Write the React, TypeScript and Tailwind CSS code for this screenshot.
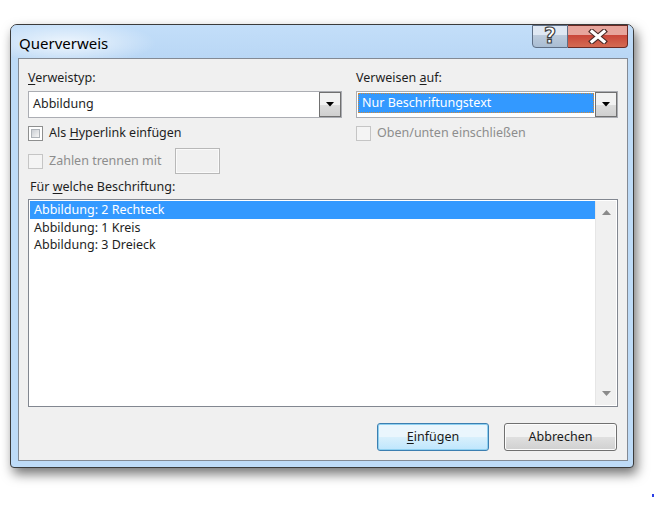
import { ReactNode } from "react";

const font = "font-['Noto_Sans',sans-serif]";

const Check = ({ disabled }: { disabled?: boolean }) => (
    <span
        className={
            disabled
                ? "w-[15px] h-[15px] border border-[#c5c5c5] bg-[#f4f4f4] shrink-0"
                : "w-[15px] h-[15px] border border-[#8e8f8f] bg-white p-[2px] shrink-0"
        }
    >
        {!disabled && (
            <span className="block w-full h-full border border-[#aeb3b9] bg-gradient-to-br from-[#cbcfd5] to-[#f6f6f6]" />
        )}
    </span>
);

const DropButton = () => (
    <div className="w-[22px] h-full border border-[#707070] bg-gradient-to-b from-[#f2f2f2] from-50% via-[#dddddd] via-50% to-[#cfcfcf] flex items-center justify-center">
        <svg width="8" height="5" viewBox="0 0 8 5">
            <path d="M0 0 H8 L4 4.5 Z" fill="#000" />
        </svg>
    </div>
);

const Button = ({ children, primary }: { children: ReactNode; primary?: boolean }) => (
    <div
        className={
            primary
                ? "w-[112px] h-[28px] rounded-[3px] border border-[#3c7fb1] bg-gradient-to-b from-[#eaf6fd] from-50% via-[#d9f0fc] via-50% to-[#bee6fd] shadow-[inset_0_0_0_1px_#8fd0f0] flex items-center justify-center text-[#1a1a1a]"
                : "w-[113px] h-[28px] rounded-[3px] border border-[#707070] bg-gradient-to-b from-[#f2f2f2] from-50% via-[#e0e0e0] via-50% to-[#d0d0d0] shadow-[inset_0_0_0_1px_#fcfcfc] flex items-center justify-center text-[#1a1a1a]"
        }
    >
        {children}
    </div>
);

export default function App() {
    const items = ["Abbildung: 2 Rechteck", "Abbildung: 1 Kreis", "Abbildung: 3 Dreieck"];

    return (
        <div className={`w-[655px] h-[509px] bg-white relative overflow-hidden pt-[24px] pl-[10px] ${font} text-[12.5px] text-[#1e1e1e]`}>
            {/* window */}
            <div className="w-[624px] h-[444px] rounded-t-[7px] rounded-b-[4px] border border-[#3b3b3b] bg-[#bedbf7] shadow-[3px_6px_12px_rgba(0,0,0,0.55)] flex flex-col">
                {/* title bar */}
                <div className="h-[33px] flex items-start rounded-t-[6px] bg-[radial-gradient(ellipse_90px_22px_at_55px_18px,rgba(255,255,255,0.75),rgba(255,255,255,0)),linear-gradient(to_bottom,#c3def9,#b9d7f5)]">
                    <div className="pl-[8px] pt-[8px] text-[15px] leading-[20px] text-black">Querverweis</div>
                    <div className="ml-auto mr-[5px] flex h-[23px]">
                        <div className="w-[36px] h-[23px] rounded-bl-[4px] border border-[#5e6f86] bg-gradient-to-b from-[#dfe8f3] from-45% via-[#bccbdc] via-45% to-[#a9bdd3] flex items-center justify-center">
                            <span className="text-[21px] leading-none font-bold text-white [-webkit-text-stroke:1.2px_#3f3f3f] font-['DejaVu_Sans',sans-serif]">?</span>
                        </div>
                        <div className="w-[60px] h-[23px] rounded-br-[4px] border border-l-0 border-[#6b2a24] bg-gradient-to-b from-[#e7a59c] from-45% via-[#c9473a] via-45% to-[#d46a52] flex items-center justify-center">
                            <svg width="20" height="15" viewBox="0 0 20 15">
                                <path d="M4 2.5 L16 12.5 M16 2.5 L4 12.5" stroke="#4a2a26" strokeWidth="5.5" strokeLinecap="square" />
                                <path d="M4 2.5 L16 12.5 M16 2.5 L4 12.5" stroke="#ffffff" strokeWidth="3.2" strokeLinecap="square" />
                            </svg>
                        </div>
                    </div>
                </div>

                {/* client area */}
                <div className="ml-[7px] w-[610px] h-[403px] border border-[#838a94] bg-[#f0f0f0] px-[9px] pt-[11px]">
                    <div className="flex gap-[14px]">
                        <div className="w-[314px]">
                            <div className="h-[16px] leading-[16px]"><span className="underline underline-offset-2">V</span>erweistyp:</div>
                            <div className="mt-[5px] h-[27px] border border-[#abadb3] bg-white flex">
                                <div className="flex-1 pl-[4px] flex items-center">Abbildung</div>
                                <DropButton />
                            </div>
                            <div className="mt-[8px] h-[15px] flex items-center gap-[6px]">
                                <Check />
                                <span>Als <span className="underline underline-offset-2">H</span>yperlink einfügen</span>
                            </div>
                            <div className="mt-[7px] h-[26px] flex items-center">
                                <Check disabled />
                                <span className="ml-[6px] text-[#8d8d8d]">Zahlen trennen mit</span>
                                <div className="ml-auto mr-[122px] w-[45px] h-[26px] border border-[#b8b8b8] bg-[#f0f0f0] shadow-[inset_0_0_0_1px_#fafafa]" />
                            </div>
                        </div>
                        <div className="w-[262px]">
                            <div className="h-[16px] leading-[16px]">Verweisen <span className="underline underline-offset-2">a</span>uf:</div>
                            <div className="mt-[5px] h-[27px] border border-[#abadb3] bg-white flex">
                                <div className="flex-1 pl-[1px] pt-[1px] pb-[4px] pr-[1px]">
                                    <div className="h-full bg-[#3399ff] text-white pl-[4px] flex items-center outline-1 outline-dotted outline-[#d08a3a] -outline-offset-1">
                                        Nur Beschriftungstext
                                    </div>
                                </div>
                                <DropButton />
                            </div>
                            <div className="mt-[8px] h-[15px] flex items-center gap-[6px]">
                                <Check disabled />
                                <span className="text-[#8d8d8d]">Oben/unten einschließen</span>
                            </div>
                        </div>
                    </div>

                    <div className="mt-[5px] h-[16px] leading-[16px] pl-[2px]">Für <span className="underline underline-offset-2">w</span>elche Beschriftung:</div>
                    <div className="mt-[4px] h-[208px] border border-[#828790] bg-white flex p-[1px]">
                        <div className="flex-1">
                            {items.map((item, i) => (
                                <div
                                    key={item}
                                    className={i === 0 ? "h-[18px] leading-[18px] pl-[4px] bg-[#3399ff] text-white" : "h-[17px] leading-[17px] pl-[4px]"}
                                >
                                    {item}
                                </div>
                            ))}
                        </div>
                        <div className="w-[21px] bg-[#f0f0f0] border-l border-[#e6e6e6] flex flex-col justify-between items-center py-[9px]">
                            <svg width="9" height="5" viewBox="0 0 9 5"><path d="M0 5 L4.5 0 L9 5 Z" fill="#8a8a8a" /></svg>
                            <svg width="9" height="5" viewBox="0 0 9 5"><path d="M0 0 L9 0 L4.5 5 Z" fill="#8a8a8a" /></svg>
                        </div>
                    </div>

                    <div className="mt-[16px] mr-[1px] flex justify-end gap-[15px]">
                        <Button primary><span><span className="underline underline-offset-2">E</span>infügen</span></Button>
                        <Button>Abbrechen</Button>
                    </div>
                </div>
            </div>
            <div className="absolute left-[652px] top-[494px] w-[2px] h-[3px] bg-[#2b3fe6]" />
        </div>
    );
}
